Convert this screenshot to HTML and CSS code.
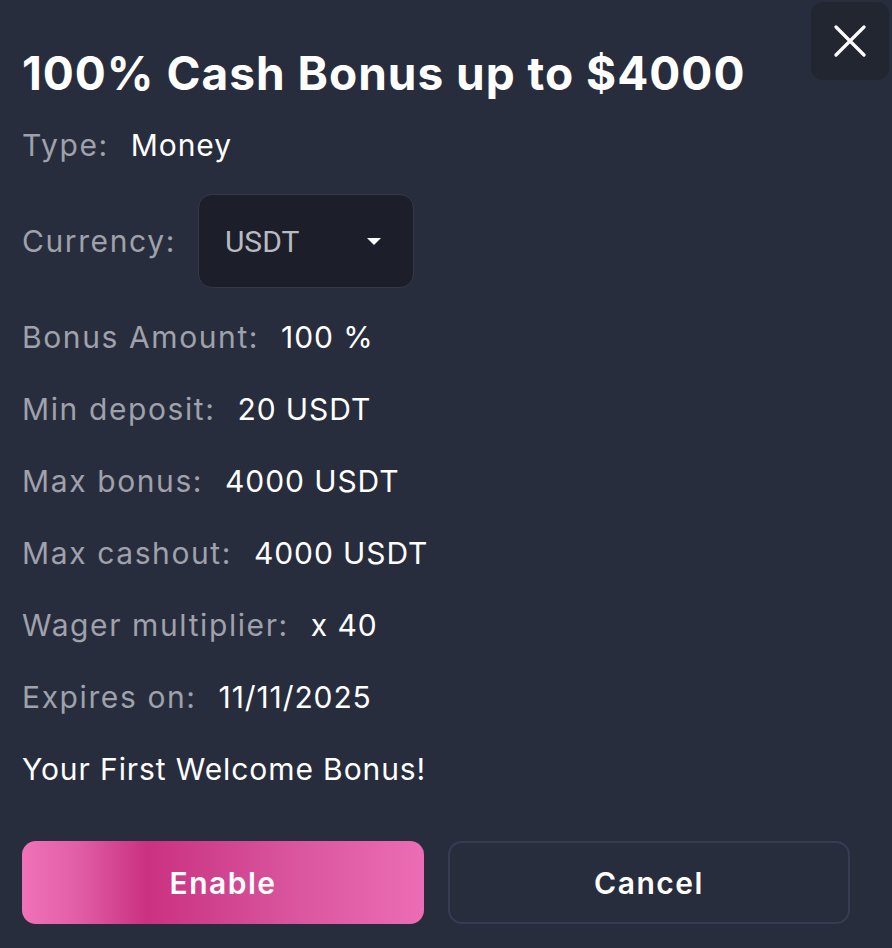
FILE: index.html
```html
<!DOCTYPE html>
<html lang="en">

<head>
    <meta charset="UTF-8">
    <meta name="viewport" content="width=device-width, initial-scale=1.0">
    <title>Bonus</title>
    <link rel="stylesheet" href="styles.css">
</head>

<body>
    <div class="modal">
        <button class="close-btn" aria-label="Close">
            <svg viewBox="0 0 32 32" width="32" height="32">
                <path d="M2 2 L30 30 M30 2 L2 30" />
            </svg>
        </button>

        <h1 class="title">100% Cash Bonus up to $4000</h1>

        <div class="info-row">
            <span class="label">Type:</span>
            <span class="value">Money</span>
        </div>
        <div class="info-row currency-row">
            <span class="label">Currency:</span>
            <div class="select">
                <span class="select_text">USDT</span>
                <span class="caret"></span>
            </div>
        </div>
        <div class="info-row">
            <span class="label">Bonus Amount:</span>
            <span class="value">100 %</span>
        </div>
        <div class="info-row">
            <span class="label">Min deposit:</span>
            <span class="value">20 USDT</span>
        </div>
        <div class="info-row">
            <span class="label">Max bonus:</span>
            <span class="value">4000 USDT</span>
        </div>
        <div class="info-row">
            <span class="label">Max cashout:</span>
            <span class="value">4000 USDT</span>
        </div>
        <div class="info-row">
            <span class="label">Wager multiplier:</span>
            <span class="value">x 40</span>
        </div>
        <div class="info-row">
            <span class="label">Expires on:</span>
            <span class="value">11/11/2025</span>
        </div>
        <div class="info-row">
            <span class="value">Your First Welcome Bonus!</span>
        </div>

        <div class="actions">
            <button class="btn btn-enable">Enable</button>
            <button class="btn btn-cancel">Cancel</button>
        </div>
    </div>
</body>

</html>
```

FILE: styles.css
```css
body {
    font-family: 'Inter', sans-serif;
    margin: 0;
    background: #282d3d;
    min-height: 100vh;
}

.modal {
    position: relative;
    padding: 37px 42px 0 22px;
}

.close-btn {
    position: absolute;
    top: 2px;
    right: 3px;
    width: 78px;
    height: 78px;
    border: none;
    border-radius: 12px;
    background: #222631;
    display: flex;
    align-items: center;
    justify-content: center;
    padding: 0;
}

.close-btn svg path {
    stroke: #ffffff;
    stroke-width: 3.2;
    stroke-linecap: round;
    fill: none;
}

.title {
    margin: 0;
    font-size: 46px;
    line-height: 72px;
    font-weight: 700;
    color: #ffffff;
    letter-spacing: 1px;
}

.info-row {
    display: flex;
    align-items: center;
    gap: 22px;
    height: 72px;
    font-size: 30px;
    letter-spacing: 1.6px;
}

.currency-row {
    height: 120px;
}

.label {
    color: #9fa1ab;
}

.value {
    color: #ffffff;
    letter-spacing: 0.9px;
}

.select {
    width: 216px;
    height: 94px;
    box-sizing: border-box;
    display: flex;
    align-items: center;
    justify-content: space-between;
    padding: 0 32px 0 26px;
    background: #1c1f29;
    border: 1px solid #343849;
    border-radius: 14px;
}

.select_text {
    font-family: 'Roboto', sans-serif;
    color: #b9bac1;
    font-size: 30px;
    letter-spacing: 0;
}

.caret {
    width: 0;
    height: 0;
    border-left: 7px solid transparent;
    border-right: 7px solid transparent;
    border-top: 7px solid #ffffff;
}

.actions {
    display: flex;
    gap: 24px;
    margin-top: 36px;
}

.btn {
    width: 402px;
    height: 83px;
    border-radius: 14px;
    font-family: inherit;
    font-size: 30px;
    font-weight: 600;
    letter-spacing: 1.5px;
    color: #ffffff;
    cursor: pointer;
}

.btn-enable {
    border: none;
    background: linear-gradient(90deg, #f072b8 0%, #e15ea6 14%, #cb3181 31%, #d0428e 48%, #db57a0 70%, #ec6db5 100%);
}

.btn-cancel {
    background: transparent;
    border: 2px solid #363c54;
}
```
